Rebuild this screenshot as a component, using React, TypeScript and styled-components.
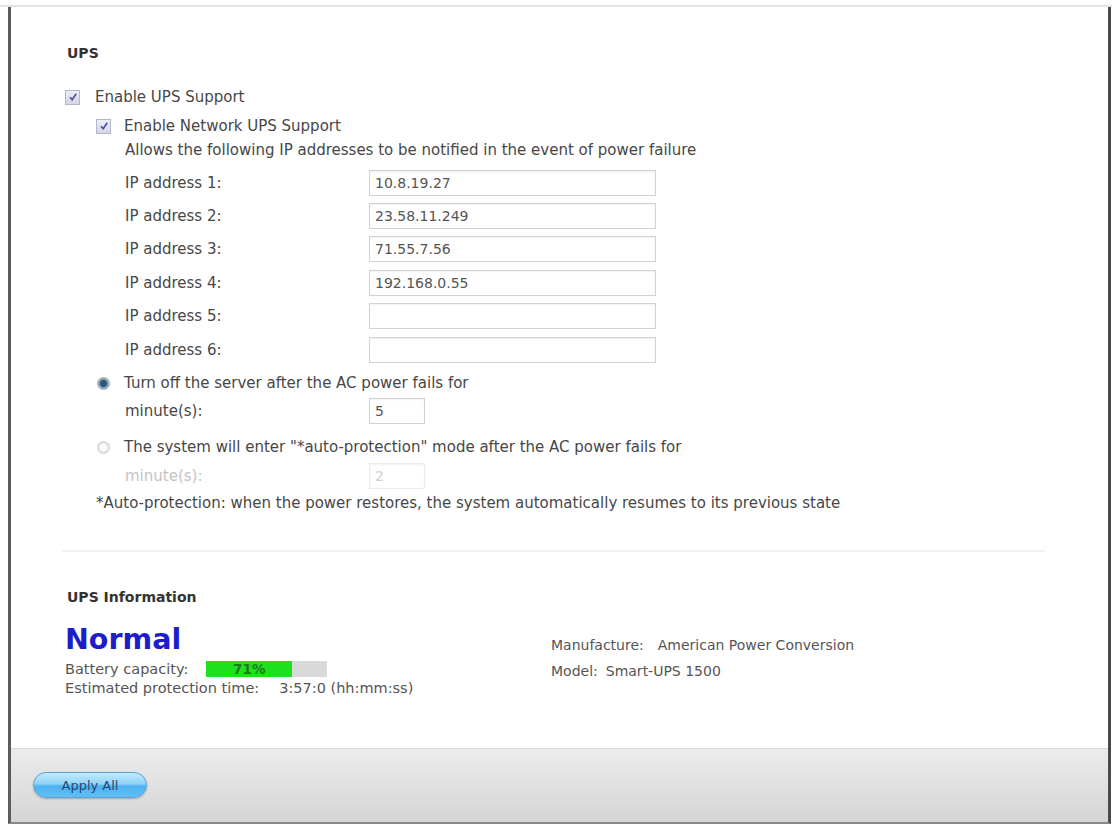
import React from 'react';
import styled, { createGlobalStyle } from 'styled-components';

const GlobalStyle = createGlobalStyle`
  html, body {
    margin: 0;
    padding: 0;
    background: #fff;
  }
  body {
    font-family: "DejaVu Sans", Verdana, sans-serif;
    color: #474747;
  }
`;

const Page = styled.div`
  margin-top: 5px;
  height: 819px;
  border-top: 2px solid #e3e3e3;
  box-sizing: border-box;
`;

const Frame = styled.div`
  display: flex;
  flex-direction: column;
  height: 100%;
  margin: 0 1px 0 8px;
  border-left: 3px solid #5c5c5c;
  border-right: 3px solid #4a4a4a;
  border-bottom: 2px solid #8a8a8a;
  box-sizing: border-box;
`;

const Content = styled.div`
  flex: 1;
  padding: 37px 0 0 54px;
  background: #fff;
`;

const SectionTitle = styled.div<{ $gap?: number }>`
  height: 18px;
  line-height: 18px;
  padding-left: 2px;
  margin-top: ${({ $gap }) => $gap ?? 0}px;
  font-size: 14px;
  font-weight: bold;
  color: #333;
`;

const Row = styled.div<{ $h?: number; $mt?: number; $muted?: boolean }>`
  display: flex;
  align-items: center;
  height: ${({ $h }) => $h ?? 24}px;
  margin-top: ${({ $mt }) => $mt ?? 0}px;
  font-size: 15px;
  color: ${({ $muted }) => ($muted ? '#c4c4c4' : '#474747')};
  white-space: nowrap;
`;

const Group = styled.div<{ $indent: number }>`
  padding-left: ${({ $indent }) => $indent}px;
`;

const Label = styled.span<{ $w?: number }>`
  display: inline-block;
  width: ${({ $w }) => ($w ? `${$w}px` : 'auto')};
  flex: none;
`;

const BoxLabel = styled.span<{ $gap: number }>`
  margin-left: ${({ $gap }) => $gap}px;
`;

const CheckBox = styled.span`
  display: inline-flex;
  align-items: center;
  justify-content: center;
  width: 15px;
  height: 15px;
  box-sizing: border-box;
  border: 1px solid #b4b7c8;
  background: linear-gradient(#eceef5, #d3d6e4);
  flex: none;
`;

const Radio = styled.span<{ $on?: boolean }>`
  display: inline-block;
  width: 13px;
  height: 13px;
  margin-left: 1px;
  border-radius: 50%;
  box-sizing: border-box;
  flex: none;
  border: 1px solid ${({ $on }) => ($on ? '#9aa8b4' : '#cfcfcf')};
  background: ${({ $on }) =>
    $on
      ? 'radial-gradient(circle at 50% 50%, #2f5878 0 3px, #6d8ea6 4px, #d9e2ea 6px)'
      : 'radial-gradient(circle at 50% 50%, #fafafa 0 3px, #dedede 5px, #efefef 6px)'};
`;

const TextInput = styled.input<{ $w: number; $off?: boolean }>`
  width: ${({ $w }) => $w}px;
  height: 26px;
  box-sizing: border-box;
  padding: 0 5px;
  border: 1px solid ${({ $off }) => ($off ? '#ececec' : '#d2d2d2')};
  box-shadow: inset 0 1px 2px rgba(0, 0, 0, 0.06);
  background: #fff;
  font-family: "DejaVu Sans", Verdana, sans-serif;
  font-size: 14px;
  color: ${({ $off }) => ($off ? '#cfcfcf' : '#555')};
  outline: none;
`;

const IpList = styled.div`
  margin-top: 4px;
  padding-left: 29px;
`;

const IpRow = styled.div`
  display: flex;
  align-items: center;
  height: 33.4px;
  font-size: 15px;
  color: #474747;
`;

const Divider = styled.div`
  margin: 35px 0 0 -3px;
  width: 983px;
  height: 2px;
  background: #f1f1f1;
`;

const InfoGrid = styled.div`
  display: grid;
  grid-template-columns: 486px 1fr;
  margin-top: 19px;
`;

const InfoCol = styled.div<{ $pt?: number; $size: number }>`
  display: flex;
  flex-direction: column;
  padding-top: ${({ $pt }) => $pt ?? 0}px;
  font-size: ${({ $size }) => $size}px;
`;

const Status = styled.div`
  height: 30px;
  line-height: 30px;
  font-size: 28.5px;
  font-weight: bold;
  color: #1d1dcc;
`;

const InfoLine = styled.div<{ $mt?: number; $h?: number }>`
  display: flex;
  align-items: center;
  height: ${({ $h }) => $h ?? 16}px;
  margin-top: ${({ $mt }) => $mt ?? 0}px;
  color: #555;
  white-space: nowrap;
`;

const Value = styled.span<{ $gap: number }>`
  margin-left: ${({ $gap }) => $gap}px;
`;

const Bar = styled.div`
  width: 121px;
  height: 16px;
  margin-left: 18px;
  background: #d9d9d9;
  display: flex;
`;

const BarFill = styled.div`
  height: 100%;
  background: #1fe01f;
  display: flex;
  align-items: center;
  justify-content: center;
  font-size: 13.5px;
  font-weight: bold;
  color: #1c7a1c;
`;

const Footer = styled.div`
  flex: none;
  height: 74px;
  box-sizing: border-box;
  border-top: 1px solid #d9d9d9;
  background: linear-gradient(#ececec, #dcdcdc 70%, #d5d5d5);
  padding: 23px 0 0 22px;
`;

const ApplyButton = styled.button`
  width: 114px;
  height: 26px;
  border-radius: 13px;
  border: 1px solid #5ba3d6;
  background: linear-gradient(#c4eafc 0%, #8fd3f7 45%, #4cb2ef 55%, #5fc0f4 100%);
  box-shadow: 0 1px 2px rgba(0, 0, 0, 0.25);
  font-family: "DejaVu Sans", Verdana, sans-serif;
  font-size: 13px;
  color: #2a4775;
  cursor: pointer;
  padding: 0;
`;

const Check = () => (
  <CheckBox>
    <svg width="10" height="10" viewBox="0 0 10 10">
      <path d="M2 5.2 L4.2 7.6 L8.2 1.8" fill="none" stroke="#4b4ba8" strokeWidth="1.6" />
    </svg>
  </CheckBox>
);

const ips = ['10.8.19.27', '23.58.11.249', '71.55.7.56', '192.168.0.55', '', ''];

export default function App() {
  const capacity = 71;

  return (
    <>
      <GlobalStyle />
      <Page>
        <Frame>
          <Content>
            <SectionTitle>UPS</SectionTitle>

            <Row $mt={23}>
              <Check />
              <BoxLabel $gap={15}>Enable UPS Support</BoxLabel>
            </Row>

            <Group $indent={31}>
              <Row $mt={5}>
                <Check />
                <BoxLabel $gap={13}>Enable Network UPS Support</BoxLabel>
              </Row>
              <Group $indent={29}>
                <Row>Allows the following IP addresses to be notified in the event of power failure</Row>
              </Group>

              <IpList>
                {ips.map((ip, i) => (
                  <IpRow key={i}>
                    <Label $w={244}>IP address {i + 1}:</Label>
                    <TextInput $w={287} defaultValue={ip} />
                  </IpRow>
                ))}
              </IpList>

              <Row $mt={5}>
                <Radio $on />
                <BoxLabel $gap={14}>Turn off the server after the AC power fails for</BoxLabel>
              </Row>
              <Group $indent={29}>
                <Row $h={26} $mt={3}>
                  <Label $w={244}>minute(s):</Label>
                  <TextInput $w={56} defaultValue="5" />
                </Row>
              </Group>

              <Row $mt={11}>
                <Radio />
                <BoxLabel $gap={14}>The system will enter "*auto-protection" mode after the AC power fails for</BoxLabel>
              </Row>
              <Group $indent={29}>
                <Row $h={26} $mt={4} $muted>
                  <Label $w={244}>minute(s):</Label>
                  <TextInput $w={56} $off disabled defaultValue="2" />
                </Row>
              </Group>

              <Row $mt={2}>
                *Auto-protection: when the power restores, the system automatically resumes to its previous state
              </Row>
            </Group>

            <Divider />

            <SectionTitle $gap={36}>UPS Information</SectionTitle>

            <InfoGrid>
              <InfoCol $size={14.5}>
                <Status>Normal</Status>
                <InfoLine $mt={6}>
                  Battery capacity:
                  <Bar>
                    <BarFill style={{ width: `${capacity}%` }}>{capacity}%</BarFill>
                  </Bar>
                </InfoLine>
                <InfoLine $mt={3}>
                  Estimated protection time:
                  <Value $gap={20}>3:57:0 (hh:mm:ss)</Value>
                </InfoLine>
              </InfoCol>
              <InfoCol $pt={11} $size={14}>
                <InfoLine $h={18}>
                  Manufacture:
                  <Value $gap={14}>American Power Conversion</Value>
                </InfoLine>
                <InfoLine $h={18} $mt={8}>
                  Model:
                  <Value $gap={8}>Smart-UPS 1500</Value>
                </InfoLine>
              </InfoCol>
            </InfoGrid>
          </Content>

          <Footer>
            <ApplyButton>Apply All</ApplyButton>
          </Footer>
        </Frame>
      </Page>
    </>
  );
}
